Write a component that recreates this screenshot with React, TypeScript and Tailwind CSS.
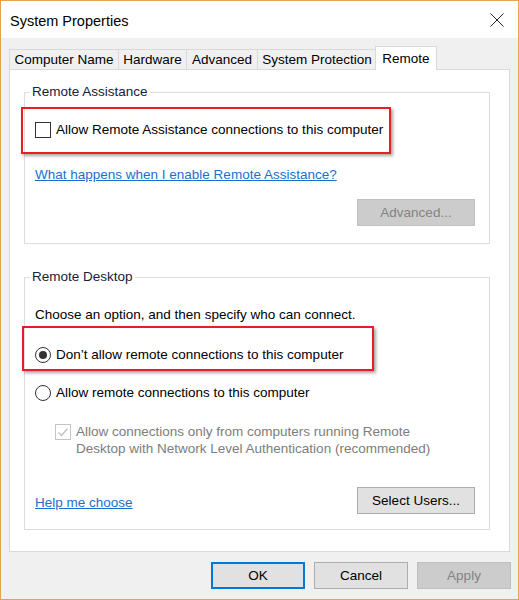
import React from "react";

function Checkbox() {
  return <span className="block h-[16px] w-[16px] shrink-0 border border-[#333333] bg-white" />;
}

function DisabledCheck() {
  return (
    <span className="mt-[1px] block h-[16px] w-[16px] shrink-0 border border-[#c4c4c4] bg-white">
      <svg viewBox="0 0 14 14" className="h-[14px] w-[14px]">
        <path d="M2.5 7.5 L5.5 10.5 L11.5 3.5" fill="none" stroke="#bdbdbd" strokeWidth="1.2" />
      </svg>
    </span>
  );
}

function Radio({ checked }: { checked?: boolean }) {
  return (
    <span className="flex h-[16px] w-[16px] shrink-0 items-center justify-center rounded-full border border-[#333333] bg-white">
      {checked && <span className="block h-[8px] w-[8px] rounded-full bg-[#333333]" />}
    </span>
  );
}

function Tab({ label, w, first }: { label: string; w: string; first?: boolean }) {
  return (
    <div
      className={`flex h-[20px] items-center justify-center border-x border-t border-[#d9d9d9] bg-[#f0f0f0] ${w} ${
        first ? "" : "-ml-px"
      }`}
    >
      {label}
    </div>
  );
}

export default function App() {
  return (
    <div className="relative flex h-[600px] w-[519px] flex-col overflow-hidden border border-[#e6a251] bg-[#f0f0f0] font-['Liberation_Sans',Arial,sans-serif] text-[13.5px] leading-[20px] text-black">
      {/* title bar */}
      <div className="flex h-[37px] items-center justify-between bg-white pl-[9px] pr-[14px]">
        <span className="mt-[3px] text-[14.5px]">System Properties</span>
        <svg viewBox="0 0 14 14" className="h-[14px] w-[14px]">
          <path d="M0.5 0.5 L13.5 13.5 M13.5 0.5 L0.5 13.5" stroke="#222" strokeWidth="1" />
        </svg>
      </div>

      {/* tabs */}
      <div className="mt-[8px] flex h-[23px] items-end pl-[8px]">
        <Tab label="Computer Name" w="w-[110px]" first />
        <Tab label="Hardware" w="w-[69px]" />
        <Tab label="Advanced" w="w-[72px]" />
        <Tab label="System Protection" w="w-[120px]" />
        <div className="relative z-10 -mb-px -ml-[2px] flex h-[24px] w-[62px] items-center justify-center border-x border-t border-[#d9d9d9] bg-white">
          Remote
        </div>
      </div>

      {/* tab panel */}
      <div className="ml-[8px] w-[501px] border border-[#d9d9d9] bg-white pb-[21px] pl-[14px] pt-[22px]">
        <div className="relative w-[466px] border border-[#dcdcdc] pb-[17px] pt-[27px]">
          <span className="absolute left-[5px] top-[-11px] bg-white px-[2px] text-[#17203a]">Remote Assistance</span>
          <div className="flex h-[20px] items-center gap-[5px] pl-[10px]">
            <Checkbox />
            <span>Allow Remote Assistance connections to this computer</span>
          </div>
          <div className="mt-[25px] h-[20px] pl-[10px]">
            <a href="#" className="text-[#1c6fd0] underline">
              What happens when I enable Remote Assistance?
            </a>
          </div>
          <div className="mt-[14px] flex justify-end pr-[14px]">
            <button className="h-[27px] w-[118px] border border-[#bfbfbf] bg-[#cccccc] text-[#838383]">Advanced...</button>
          </div>
        </div>

        <div className="relative mt-[33px] w-[466px] border border-[#dcdcdc] pb-[15px] pt-[27px]">
          <span className="absolute left-[5px] top-[-11px] bg-white px-[2px] text-[#17203a]">Remote Desktop</span>
          <div className="h-[20px] pl-[10px]">Choose an option, and then specify who can connect.</div>
          <div className="mt-[20px] flex h-[20px] items-center gap-[5px] pl-[10px]">
            <Radio checked />
            <span>Don’t allow remote connections to this computer</span>
          </div>
          <div className="mt-[18px] flex h-[20px] items-center gap-[5px] pl-[10px]">
            <Radio />
            <span>Allow remote connections to this computer</span>
          </div>
          <div className="mt-[20px] flex items-start gap-[5px] pl-[30px]">
            <DisabledCheck />
            <span className="leading-[17px] text-[#7d7d7d]">
              Allow connections only from computers running Remote
              <br />
              Desktop with Network Level Authentication (recommended)
            </span>
          </div>
          <div className="mt-[30px] flex h-[27px] items-center justify-between pl-[10px] pr-[14px]">
            <a href="#" className="mt-[5px] text-[#1c6fd0] underline">
              Help me choose
            </a>
            <button className="h-[27px] w-[118px] border border-[#adadad] bg-[#e1e1e1]">Select Users...</button>
          </div>
        </div>
      </div>

      {/* dialog buttons */}
      <div className="mt-[10px] flex justify-end gap-[9px] pr-[7px]">
        <button className="h-[27px] w-[94px] border-2 border-[#0078d7] bg-[#e1e1e1]">OK</button>
        <button className="h-[27px] w-[94px] border border-[#adadad] bg-[#e1e1e1]">Cancel</button>
        <button className="h-[27px] w-[94px] border border-[#bfbfbf] bg-[#cccccc] text-[#838383]">Apply</button>
      </div>

      {/* red highlight boxes */}
      <div className="absolute left-[20px] top-[106px] h-[47px] w-[370px] border-2 border-[#ea1c24] shadow-[2px_2px_3px_rgba(0,0,0,0.35)]" />
      <div className="absolute left-[21px] top-[325px] h-[45px] w-[352px] border-2 border-[#ea1c24] shadow-[2px_2px_3px_rgba(0,0,0,0.35)]" />
    </div>
  );
}
